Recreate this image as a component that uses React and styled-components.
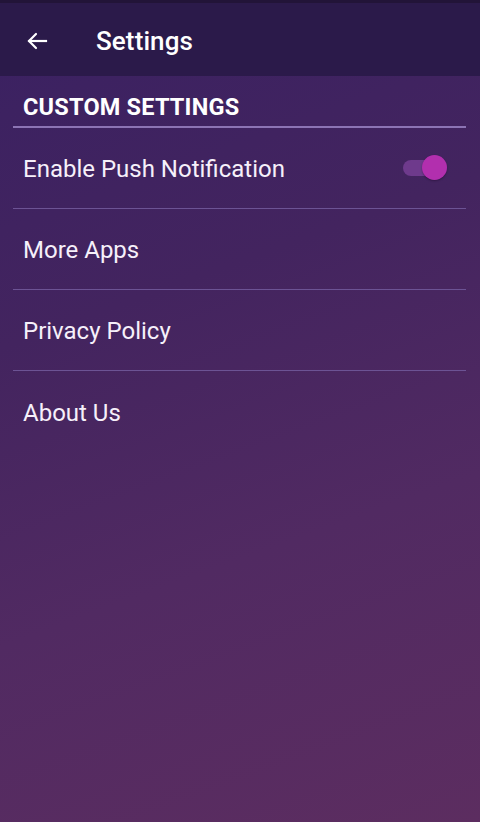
import React, { useState } from "react";
import styled, { createGlobalStyle } from "styled-components";

const Global = createGlobalStyle`
  html, body { margin: 0; padding: 0; }
  body { font-family: Roboto, "Noto Sans", sans-serif; }
  #root { min-height: 822px; }
`;

const Screen = styled.div`
  width: 480px;
  height: 822px;
  display: flex;
  flex-direction: column;
  background: linear-gradient(160deg, #3a2162 0%, #43245f 35%, #512a62 65%, #5c2d60 100%);
  color: #f4eef8;
  overflow: hidden;
`;

const Toolbar = styled.header`
  height: 76px;
  box-sizing: border-box;
  border-top: 3px solid #221438;
  background: #2b1a4a;
  display: flex;
  align-items: center;
  padding: 2px 0 0 24px;
  gap: 46px;
`;

const BackButton = styled.button`
  border: 0;
  background: none;
  padding: 0;
  width: 26px;
  height: 26px;
  display: flex;
  align-items: center;
  justify-content: center;
  color: #ffffff;
`;

const Title = styled.h1`
  margin: 0;
  font-size: 26px;
  font-weight: 500;
  color: #ffffff;
  letter-spacing: 0.1px;
`;

const Content = styled.main`
  padding: 17px 14px 0 13px;
  display: flex;
  flex-direction: column;
`;

const SectionTitle = styled.h2`
  margin: 0;
  padding: 0 0 5px 10px;
  font-size: 23.5px;
  font-weight: 700;
  color: #ffffff;
  letter-spacing: 0.2px;
  border-bottom: 2px solid #8c74b4;
`;

const Row = styled.div`
  height: 81px;
  box-sizing: border-box;
  display: flex;
  align-items: center;
  justify-content: space-between;
  padding: 2px 19px 0 10px;
  border-bottom: ${p => (p.$last ? "none" : "1px solid #6c5394")};
`;

const Label = styled.span`
  font-size: 24px;
  font-weight: 400;
  color: #f6f0fa;
`;

const Switch = styled.button`
  position: relative;
  width: 46px;
  height: 26px;
  margin-top: -3px;
  border: 0;
  padding: 0;
  background: none;
  cursor: pointer;
`;

const Track = styled.span`
  position: absolute;
  left: 2px;
  right: 6px;
  top: 5px;
  height: 16px;
  border-radius: 8px;
  background: ${p => (p.$on ? "#6e3a8c" : "#5a4a78")};
`;

const Thumb = styled.span`
  position: absolute;
  top: 0;
  left: ${p => (p.$on ? "21px" : "0")};
  width: 25px;
  height: 25px;
  border-radius: 50%;
  background: ${p => (p.$on ? "#b22fae" : "#cfc6da")};
  box-shadow: 0 1px 2px rgba(20, 0, 30, 0.35);
`;

export default function App() {
  const [on, setOn] = useState(true);
  return (
    <>
      <Global />
      <Screen>
        <Toolbar>
          <BackButton aria-label="Back">
            <svg width="24" height="24" viewBox="0 0 24 24" fill="none" stroke="#fff" strokeWidth="2.2" strokeLinecap="square">
              <path d="M21 12H4.5" />
              <path d="M11 5l-7 7 7 7" strokeLinecap="round" strokeLinejoin="miter" />
            </svg>
          </BackButton>
          <Title>Settings</Title>
        </Toolbar>
        <Content>
          <SectionTitle>CUSTOM SETTINGS</SectionTitle>
          <Row>
            <Label>Enable Push Notification</Label>
            <Switch onClick={() => setOn(!on)} aria-label="toggle">
              <Track $on={on} />
              <Thumb $on={on} />
            </Switch>
          </Row>
          <Row><Label>More Apps</Label></Row>
          <Row><Label>Privacy Policy</Label></Row>
          <Row $last><Label>About Us</Label></Row>
        </Content>
      </Screen>
    </>
  );
}
